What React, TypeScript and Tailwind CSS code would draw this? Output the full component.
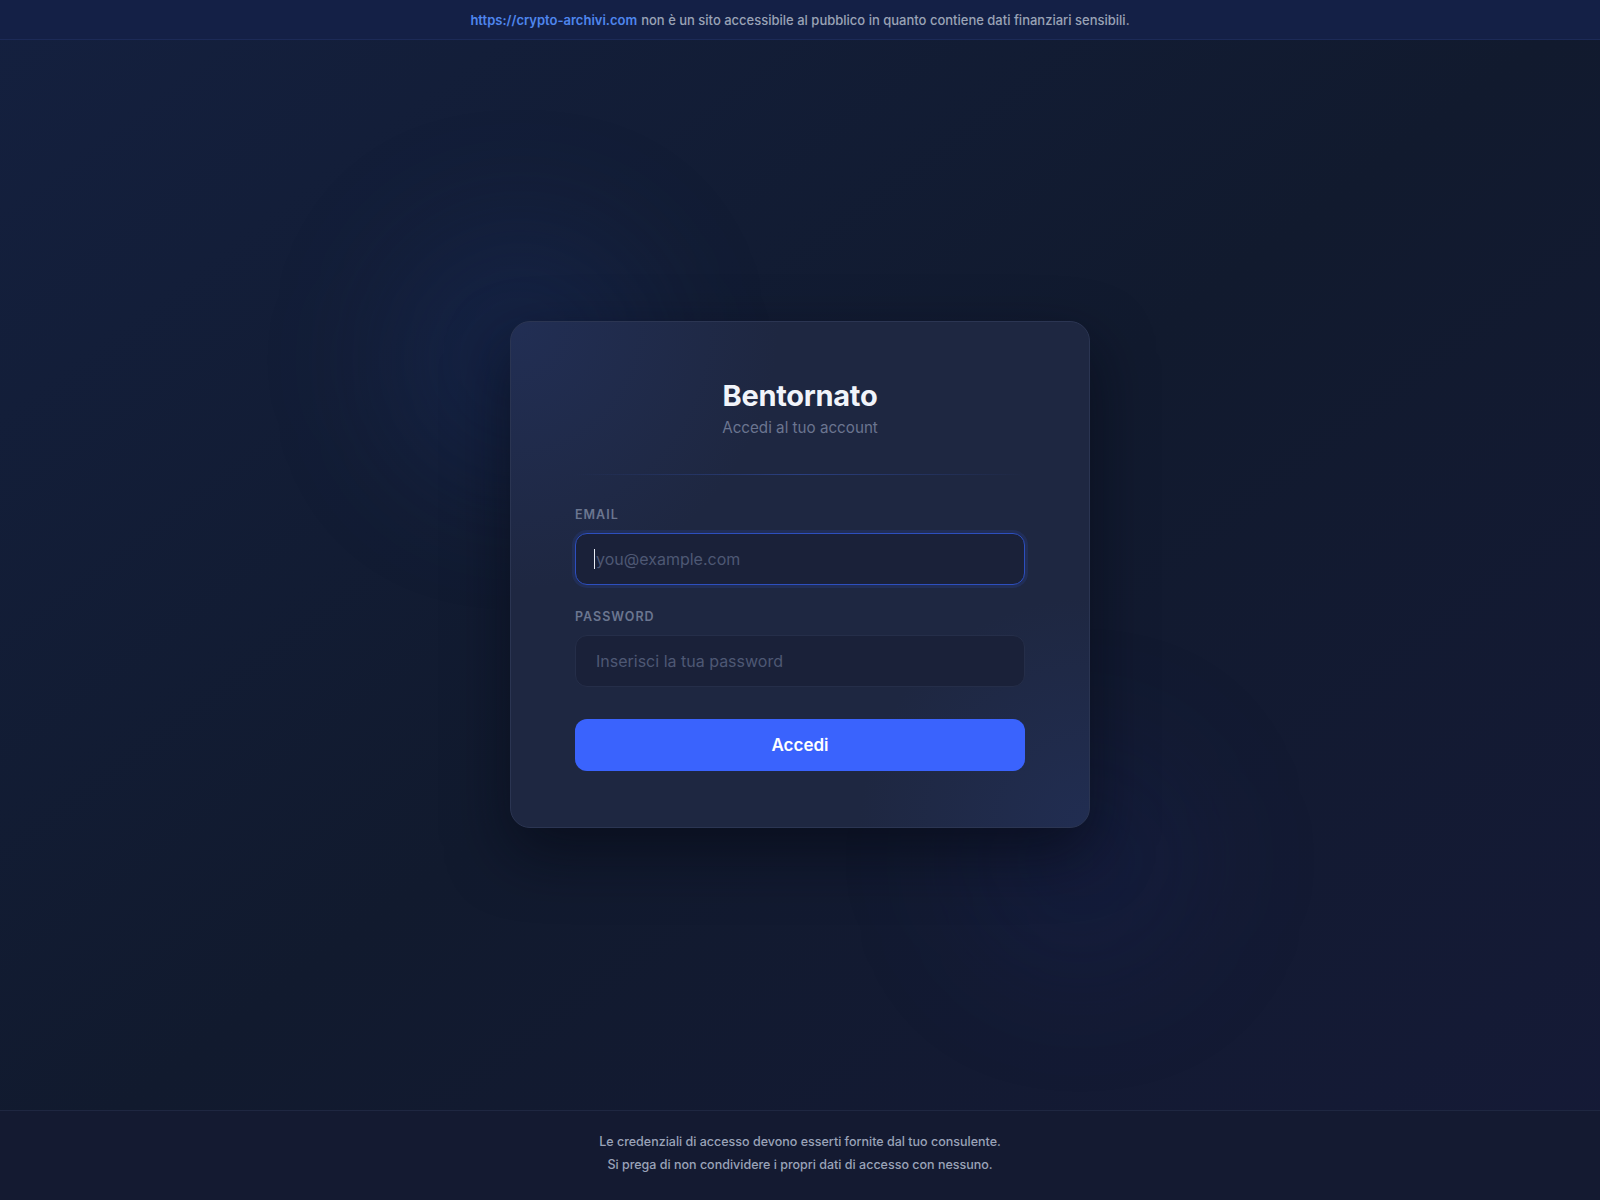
import { useState } from "react";

const LoginPage = () => {
    const [email, setEmail] = useState("");
    const [password, setPassword] = useState("");

    return (
        <div className="min-h-screen h-[1200px] flex flex-col bg-gradient-to-br from-[#14203f] via-[#111a2e] to-[#151a37] font-['Inter','Noto_Sans',sans-serif] overflow-hidden">
            {/* Notice bar */}
            <div className="h-[40px] pt-[2px] shrink-0 flex items-center justify-center bg-[#142046] border-b border-[#1c2a57] text-[13px] font-medium text-[#9aa3b6]">
                <a href="#" className="text-[#4f86ee] font-semibold">https://crypto-archivi.com</a>
                <span className="ml-[4px]">non è un sito accessibile al pubblico in quanto contiene dati finanziari sensibili.</span>
            </div>

            {/* Main */}
            <main className="relative flex-1 flex items-center justify-center pb-[2px]">
                {/* soft glows behind the card */}
                <div className="pointer-events-none absolute left-[390px] top-[190px] w-[260px] h-[260px] rounded-full bg-[#1c3270]/25 blur-[60px]" />
                <div className="pointer-events-none absolute left-[960px] top-[700px] w-[240px] h-[240px] rounded-full bg-[#1c2a70]/15 blur-[60px]" />

                <div className="relative w-[580px] rounded-[20px] border border-[#2b3552] bg-[#1e2741] bg-[radial-gradient(circle_at_0%_0%,rgba(40,60,120,0.35),transparent_35%),radial-gradient(circle_at_100%_100%,rgba(40,60,120,0.3),transparent_30%)] shadow-[0_25px_60px_rgba(5,8,20,0.6)] px-16 py-14">
                    <div className="text-center">
                        <h1 className="text-[29px] leading-9 font-bold text-[#f1f4fa] tracking-[-0.01em]">Bentornato</h1>
                        <p className="mt-1 text-[15.2px] leading-5 text-[#6b7590]">Accedi al tuo account</p>
                    </div>

                    <div className="mt-9 h-px bg-gradient-to-r from-transparent via-[#2a3f80] to-transparent" />

                    <form className="mt-8" onSubmit={(e) => e.preventDefault()}>
                        <label className="block text-[12.5px] leading-4 font-semibold tracking-[0.08em] text-[#6b7690] uppercase">Email</label>
                        <div className="relative mt-[10px]">
                            <input
                                type="email"
                                value={email}
                                onChange={(e) => setEmail(e.target.value)}
                                placeholder="you@example.com"
                                className="w-full h-[52px] rounded-xl bg-[#1a2139] border border-[#2d4fbf] ring-[3px] ring-[#2c4bb0]/20 px-5 text-[16px] text-[#e5e9f2] placeholder:text-[#4e5874] outline-none"
                            />
                            {/* text caret */}
                            <span className="pointer-events-none absolute left-[19px] top-[16px] w-px h-[20px] bg-[#e8ecf5]" />
                        </div>

                        <label className="mt-6 block text-[12.5px] leading-4 font-semibold tracking-[0.08em] text-[#6b7690] uppercase">Password</label>
                        <input
                            type="password"
                            value={password}
                            onChange={(e) => setPassword(e.target.value)}
                            placeholder="Inserisci la tua password"
                            className="mt-[10px] w-full h-[52px] rounded-xl bg-[#1a2139] border border-[#252e49] px-5 text-[16px] text-[#e5e9f2] placeholder:text-[#4e5874] outline-none"
                        />

                        <button
                            type="submit"
                            className="mt-8 w-full h-[52px] pt-[2px] rounded-xl bg-[#3a63fd] text-white text-[17px] font-semibold"
                        >
                            Accedi
                        </button>
                    </form>
                </div>
            </main>

            {/* Footer */}
            <footer className="h-[90px] pb-[6px] shrink-0 flex flex-col items-center justify-center border-t border-[#1f2741] bg-[#141a31] text-[12.5px] font-medium leading-[23px] text-[#9aa3b8]">
                <p>Le credenziali di accesso devono esserti fornite dal tuo consulente.</p>
                <p>Si prega di non condividere i propri dati di accesso con nessuno.</p>
            </footer>
        </div>
    );
};

export default function App() {
    return <LoginPage />;
}
